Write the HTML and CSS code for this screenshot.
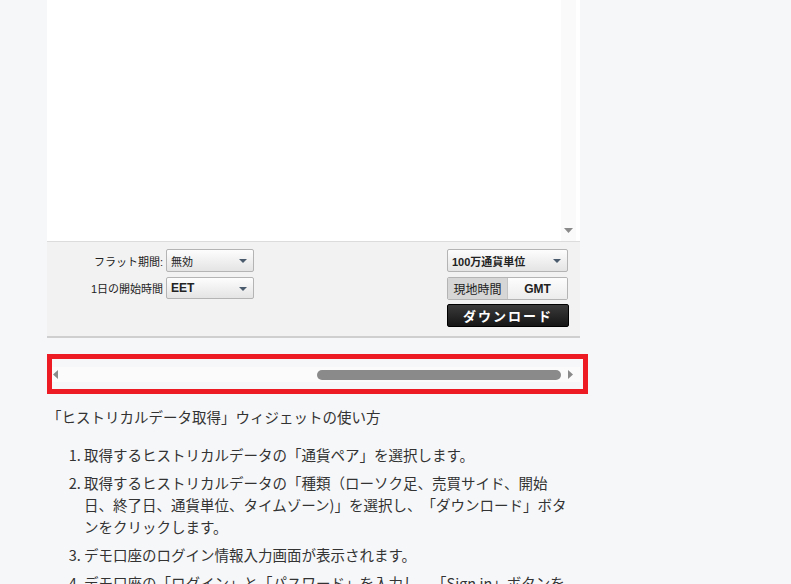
FILE: index.html
```html
<!DOCTYPE html>
<html lang="ja">
<head>
    <meta charset="UTF-8">
    <title>ヒストリカルデータ取得</title>
    <link rel="stylesheet" href="styles.css">
</head>
<body>
    <div class="page">
        <div class="widget">
            <div class="chart">
                <div class="chart-body"></div>
                <div class="vscroll">
                    <svg class="arrow-down" width="9" height="5" viewBox="0 0 9 5"><path d="M0 0h9L4.5 5z" fill="#8a8a8a"/></svg>
                </div>
            </div>
            <div class="panel">
                <div class="col-left">
                    <div class="row">
                        <span class="label">フラット期間:</span>
                        <div class="select"><span>無効</span><i class="caret"></i></div>
                    </div>
                    <div class="row">
                        <span class="label">1日の開始時間</span>
                        <div class="select select-big"><span>EET</span><i class="caret"></i></div>
                    </div>
                </div>
                <div class="col-right">
                    <div class="select select-wide"><span>100万通貨単位</span><i class="caret"></i></div>
                    <div class="toggle">
                        <span class="seg active">現地時間</span>
                        <span class="seg">GMT</span>
                    </div>
                    <button class="btn-download">ダウンロード</button>
                </div>
            </div>
        </div>

        <div class="hscroll">
            <div class="track">
                <svg width="5" height="9" viewBox="0 0 5 9"><path d="M5 0v9L0 4.5z" fill="#8a8a8a"/></svg>
                <div class="thumb"></div>
                <svg class="arrow-right" width="5" height="9" viewBox="0 0 5 9"><path d="M0 0v9l5-4.5z" fill="#8a8a8a"/></svg>
            </div>
        </div>

        <p class="howto">「ヒストリカルデータ取得」ウィジェットの使い方</p>
        <ol class="steps">
            <li>取得するヒストリカルデータの「通貨ペア」を選択します。</li>
            <li>取得するヒストリカルデータの「種類（ローソク足、売買サイド、開始日、終了日、通貨単位、タイムゾーン)」を選択し、「ダウンロード」ボタンをクリックします。</li>
            <li>デモ口座のログイン情報入力画面が表示されます。</li>
            <li>デモ口座の「ログイン」と「パスワード」を入力し、「Sign in」ボタンをクリックします。</li>
        </ol>
    </div>
</body>
</html>
```

FILE: styles.css
```css
* { margin: 0; padding: 0; box-sizing: border-box; }
body {
    background: #f6f7f9;
    font-family: 'Noto Sans CJK JP', sans-serif;
    color: #333;
}
.page {
    width: 541px;
    margin-left: 47px;
}

/* widget */
.widget { width: 533px; }
.chart {
    display: flex;
    height: 242px;
    background: #fff;
    border-bottom: 1px solid #dcdcdc;
}
.chart-body { flex: 1; }
.vscroll {
    width: 15px;
    margin-right: 4px;
    background: #fafafa;
    display: flex;
    align-items: flex-end;
    justify-content: center;
    padding-bottom: 8px;
}
.panel {
    display: flex;
    justify-content: space-between;
    height: 96px;
    background: #f2f2f2;
    border-bottom: 2px solid #cfcfcf;
    padding: 7px 11px 0 0;
    font-family: 'Liberation Sans', 'Noto Sans CJK JP', sans-serif;
    font-size: 11px;
    color: #222;
}
.col-left { display: flex; flex-direction: column; gap: 5px; }
.row { display: flex; align-items: center; }
.label {
    width: 119px;
    text-align: right;
    padding-right: 3px;
}
.select {
    position: relative;
    width: 88px;
    height: 23px;
    border: 1px solid #b4b4b4;
    border-radius: 2px;
    background: linear-gradient(#fdfdfd, #e4e4e4);
    padding-left: 4px;
    display: flex;
    align-items: center;
}
.select-big { font-size: 12px; font-weight: bold; height: 22px; }
.select-wide { width: 121px; font-weight: bold; }
.caret {
    position: absolute;
    right: 6px;
    top: 9px;
    border-left: 4px solid transparent;
    border-right: 4px solid transparent;
    border-top: 4px solid #4b5b6e;
}
.col-right { display: flex; flex-direction: column; gap: 5px; }
.toggle {
    display: flex;
    width: 121px;
    height: 23px;
    border: 1px solid #b4b4b4;
    border-radius: 2px;
    overflow: hidden;
}
.seg {
    flex: 1;
    display: flex;
    align-items: center;
    justify-content: center;
    font-size: 12px;
    font-weight: bold;
    background: linear-gradient(#fdfdfd, #ececec);
}
.seg.active {
    font-weight: normal;
    background: #d6d6d6;
    border-right: 1px solid #c4c4c4;
}
.btn-download {
    width: 122px;
    height: 23px;
    margin-top: -1px;
    border: 1px solid #000;
    border-radius: 2px;
    background: linear-gradient(#3a3a3a, #161616);
    color: #fff;
    font-family: 'Liberation Sans', 'Noto Sans CJK JP', sans-serif;
    font-size: 13px;
    font-weight: bold;
    letter-spacing: 2px;
}

/* horizontal scrollbar */
.hscroll {
    margin-top: 16px;
    border: 5px solid #ed1c24;
    height: 40px;
}
.track {
    display: flex;
    align-items: center;
    height: 15px;
    margin: 8px 3px 0 0;
    padding-left: 1px;
    background: #fbfbfb;
}
.thumb {
    margin-left: auto;
    width: 244px;
    height: 10px;
    border-radius: 5px;
    background: #8a8a8a;
}
.arrow-right { margin: 0 7px 0 7px; }

/* description */
.howto, .steps {
    font-size: 14.5px;
    line-height: 22px;
    text-spacing-trim: space-all;
}
.howto {
    width: 533px;
    margin-top: 12px;
}
.steps {
    width: 527px;
    margin-top: 16px;
    padding-left: 37px;
}
.steps li { margin-bottom: 6px; }
```
